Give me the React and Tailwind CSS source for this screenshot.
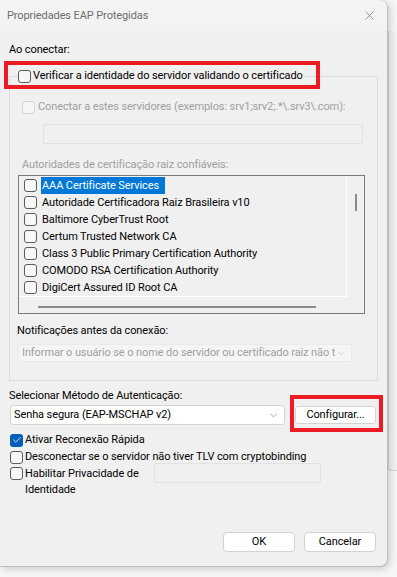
import { ChevronDown, X, Check } from 'lucide-react';

const certs = [
  'AAA Certificate Services',
  'Autoridade Certificadora Raiz Brasileira v10',
  'Baltimore CyberTrust Root',
  'Certum Trusted Network CA',
  'Class 3 Public Primary Certification Authority',
  'COMODO RSA Certification Authority',
  'DigiCert Assured ID Root CA',
];

function Box({ checked, disabled }) {
  if (checked) {
    return (
      <span className="block w-[13px] h-[13px] shrink-0 rounded-[3px] bg-[#005fb8] flex items-center justify-center">
        <Check size={10} strokeWidth={2} className="text-white" />
      </span>
    );
  }
  return (
    <span
      className={
        disabled
          ? 'block w-[13px] h-[13px] shrink-0 rounded-[3px] border border-[#d4d4d4] bg-[#f5f5f5]'
          : 'block w-[13px] h-[13px] shrink-0 rounded-[3px] border border-[#5c5c5c] bg-[#f7f7f7]'
      }
    />
  );
}

export default function App() {
  return (
    <div className="w-[397px] h-[577px] bg-[#f7f7f7] flex overflow-hidden text-[11px] tracking-[-0.1px] leading-[16px] text-[#000] whitespace-nowrap font-['Roboto',sans-serif]">
      {/* dialog */}
      <div className="relative w-[388px] h-[567px] shrink-0 bg-[#f0f0f0] rounded-tr-[8px] rounded-br-[8px] border-r border-b border-[#bdbdbd] shadow-[2px_2px_8px_rgba(0,0,0,0.18)] flex flex-col">
        {/* title bar */}
        <div className="h-[31px] bg-[#f3f3f3] rounded-tr-[8px] flex items-center justify-between pl-[7px] pr-[10px]">
          <span className="text-[#6e6e6e]">Propriedades EAP Protegidas</span>
          <X size={15} strokeWidth={1.2} className="text-[#777]" />
        </div>

        <div className="px-[9px] flex flex-col">
          <div className="mt-[11px]">Ao conectar:</div>

          {/* group box */}
          <fieldset className="mt-[10px] w-[369px] h-[313px] min-w-0 border border-[#dcdcdc] px-[8px]">
            <legend className="flex items-center gap-[2px] pr-[2px]">
              <Box />
              <span>Verificar a identidade do servidor validando o certificado</span>
            </legend>

            <div className="mt-[15px] pl-[4px] flex items-center gap-[3px] text-[#a0a0a0]">
              <Box disabled />
              <span>Conectar a estes servidores (exemplos: srv1;srv2;.*\.srv3\.com):</span>
            </div>
            <div className="mt-[9px] ml-[25px] w-[320px] h-[20px] border border-[#e2e2e2] bg-[#f0f0f0]" />

            <div className="mt-[13px] pl-[4px] text-[#a0a0a0]">Autoridades de certificação raiz confiáveis:</div>

            {/* list box */}
            <div className="mt-[2px] w-[347px] h-[139px] border border-[#7a7a7a] flex flex-col">
              <div className="flex h-[121px]">
                <div className="w-[328px] border-r border-b border-white pt-[1px] flex flex-col">
                  {certs.map((c, i) => (
                    <div key={c} className="h-[17px] flex items-center pl-[5px] gap-[4px]">
                      <Box />
                      <span
                        className={
                          i === 0
                            ? 'bg-[#0078d7] text-white h-[17px] flex items-center pl-[1px] pr-[6px]'
                            : 'pl-[1px]'
                        }
                      >
                        {c}
                      </span>
                    </div>
                  ))}
                </div>
                <div className="flex-1 pt-[18px] flex justify-center">
                  <span className="w-[2px] h-[17px] bg-[#8a8a8a]" />
                </div>
              </div>
              <div className="flex-1 pl-[19px] pt-[9px]">
                <div className="w-[278px] h-[2px] bg-[#8a8a8a]" />
              </div>
            </div>

            <div className="mt-[9px] -ml-[1px]">Notificações antes da conexão:</div>
            <div className="mt-[5px] w-[334px] h-[18px] bg-[#f5f5f5] border border-[#eaeaea] flex items-center justify-between pl-[3px] pr-[4px] text-[#a0a0a0] overflow-hidden">
              <span className="overflow-hidden">
                Informar o usuário se o nome do servidor ou certificado raiz não t
              </span>
              <ChevronDown size={11} strokeWidth={1.3} className="shrink-0 text-[#b5b5b5]" />
            </div>
          </fieldset>

          <div className="mt-[7px]">Selecionar Método de Autenticação:</div>
          <div className="mt-[1px] flex items-center">
            <div className="ml-[1px] w-[275px] h-[20px] bg-white border border-[#d3d3d3] rounded-[3px] flex items-center justify-between pl-[3px] pr-[5px]">
              <span>Senha segura (EAP-MSCHAP v2)</span>
              <ChevronDown size={11} strokeWidth={1.3} className="text-[#666]" />
            </div>
            <div className="ml-[10px] w-[81px] h-[18px] bg-white border border-[#d3d3d3] rounded-[3px] flex items-center justify-center">
              Configurar...
            </div>
          </div>

          <div className="mt-[7px] ml-[1px] flex items-center gap-[2px]">
            <Box checked />
            <span>Ativar Reconexão Rápida</span>
          </div>
          <div className="mt-[1px] ml-[1px] flex items-center gap-[2px]">
            <Box />
            <span>Desconectar se o servidor não tiver TLV com cryptobinding</span>
          </div>
          <div className="mt-[1px] ml-[1px] flex items-start">
            <div className="w-[144px] flex items-start gap-[2px]">
              <span className="block mt-[1px]">
                <Box />
              </span>
              <span>
                Habilitar Privacidade de
                <br />
                Identidade
              </span>
            </div>
            <div className="mt-[-3px] w-[167px] h-[20px] bg-[#f0f0f0] border border-[#e2e2e2]" />
          </div>
        </div>

        {/* buttons */}
        <div className="mt-auto mb-[14px] flex justify-end gap-[9px] pr-[11px]">
          <div className="w-[72px] h-[20px] bg-white border border-[#d3d3d3] rounded-[4px] flex items-center justify-center">
            OK
          </div>
          <div className="w-[72px] h-[20px] bg-white border border-[#d3d3d3] rounded-[4px] flex items-center justify-center">
            Cancelar
          </div>
        </div>

        {/* red annotation boxes */}
        <div className="absolute left-[4px] top-[61px] w-[316px] h-[28px] border-[4px] border-[#ed1c24]" />
        <div className="absolute left-[290px] top-[395px] w-[93px] h-[37px] border-[4px] border-[#ed1c24]" />
      </div>

      {/* window behind */}
      <div className="flex-1 pt-[31px]">
        <div className="h-[440px] border-l border-b border-[#d6d6d6] rounded-bl-[4px] bg-[#f3f3f3]" />
      </div>
    </div>
  );
}
